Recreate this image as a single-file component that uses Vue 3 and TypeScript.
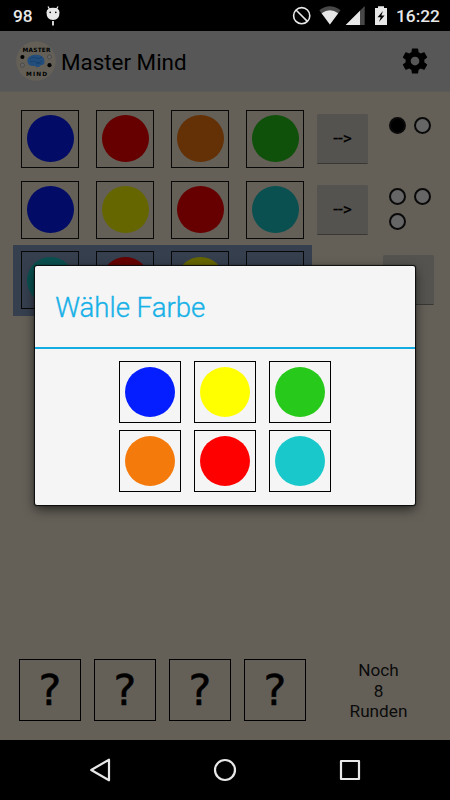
<script setup lang="ts">
type Tone = 'blue' | 'red' | 'orange' | 'green' | 'yellow' | 'teal' | 'none'
type Peg = 'black' | 'white'

interface Guess {
  colors: Tone[]
  pegs: Peg[]
}

const guesses: Guess[] = [
  { colors: ['blue', 'red', 'orange', 'green'], pegs: ['black', 'white'] },
  { colors: ['blue', 'yellow', 'red', 'teal'], pegs: ['white', 'white', 'white'] },
]
const current: Tone[] = ['teal', 'red', 'yellow', 'none']
const palette: Tone[] = ['blue', 'yellow', 'green', 'orange', 'red', 'teal']
const roundsLeft = 8
</script>

<template>
  <div class="screen">
    <header class="status">
      <span class="status-temp">98</span>
      <svg class="status-robot" width="16" height="22" viewBox="0 0 16 22">
        <path d="M3 1.5L5 5M13 1.5L11 5" stroke="#e8e8e8" stroke-width="1.3" />
        <path d="M1.500 7.500Q1.500 2.800 8 2.800T14.500 7.500Q14.500 15 8 15T1.500 7.500Z" fill="#e8e8e8" />
        <circle cx="5.200" cy="7.400" r=".8" fill="#000" />
        <circle cx="10.800" cy="7.400" r=".8" fill="#000" />
        <path d="M8 16v4.500" stroke="#e8e8e8" stroke-width="1.800" />
      </svg>
      <span class="grow"></span>
      <svg class="status-icons" width="96" height="22" viewBox="0 0 96 22">
        <g fill="none" stroke="#e8e8e8" stroke-width="1.6">
          <circle cx="9.700" cy="10.700" r="8.100" />
          <path d="M4 5L15.400 16.400" />
        </g>
        <path d="M27.300 5.200Q37.900-2.600 48.500 5.200L37.900 19.500Z" fill="#484848" />
        <path d="M29.600 8.300Q37.900 2.400 46.200 8.300L37.900 19.500Z" fill="#e8e8e8" />
        <path d="M53.700 20L72.700 1V20Z" fill="#484848" />
        <path d="M53.700 20L68 5.700V20Z" fill="#e8e8e8" />
        <path d="M83 3h3V1.200h6V3h3v17H83Z" fill="#e8e8e8" />
        <path d="M91 6L85.500 12.300H88.700L87 17L92.600 10.500H89.300L91 6Z" fill="#000" />
      </svg>
      <span class="status-clock">16:22</span>
    </header>

    <div class="appbar">
      <svg class="logo" width="40" height="40" viewBox="0 0 40 40">
        <circle cx="20" cy="20" r="19.800" fill="#646058" />
        <text class="logo-text" x="20.500" y="10.700" textLength="28">MASTER</text>
        <text class="logo-text" x="20.500" y="35.400" textLength="21">MIND</text>
        <path d="M11.500 21C10.500 16.500 15 13.500 20 13.800C25 13.500 29 16.500 28.400 20.500C29 23.500 26 24.300 24.500 24.200C24 26.500 20 27 19 24.700C15 25.500 12 24 11.500 21Z" fill="#234e7c" />
        <path d="M14 18q3-3 6-1t6-1M14 21q4-2 6 0t6-1M20 23q3-2 5 0" fill="none" stroke="#153c68" stroke-width=".8" />
        <circle cx="6.400" cy="16" r="2.100" fill="#000" />
        <circle cx="33.500" cy="24.200" r="2.100" fill="#000" />
        <circle cx="33.500" cy="16" r="2.100" fill="#646464" stroke="#444" stroke-width=".7" />
        <circle cx="6.400" cy="24.200" r="2.100" fill="#646464" stroke="#444" stroke-width=".7" />
      </svg>
      <h1 class="title">Master Mind</h1>
      <span class="grow"></span>
      <svg class="gear" width="30" height="30" viewBox="0 0 24 24">
        <path fill="#000" d="M19.430 12.980c.04-.32.07-.64.07-.98s-.03-.66-.07-.98l2.110-1.650c.19-.15.24-.42.12-.64l-2-3.460c-.12-.22-.39-.3-.61-.22l-2.490 1c-.52-.4-1.080-.73-1.690-.98l-.38-2.650C14.460 2.180 14.250 2 14 2h-4c-.25 0-.46.18-.49.42l-.38 2.650c-.61.25-1.170.59-1.690.98l-2.490-1c-.23-.09-.49 0-.61.22l-2 3.460c-.13.22-.07.49.12.64l2.110 1.650c-.04.32-.07.65-.07.98s.03.66.07.98l-2.110 1.650c-.19.15-.24.42-.12.64l2 3.460c.12.22.39.3.61.22l2.490-1c.52.4 1.080.73 1.690.98l.38 2.650c.03.24.24.42.49.42h4c.25 0 .46-.18.49-.42l.38-2.650c.61-.25 1.170-.59 1.690-.98l2.490 1c.23.09.49 0 .61-.22l2-3.460c.12-.22.07-.49-.12-.64l-2.110-1.650zM12 15.500c-1.930 0-3.500-1.570-3.500-3.500s1.570-3.500 3.500-3.500 3.500 1.570 3.500 3.500-1.570 3.500-3.500 3.500z" />
      </svg>
    </div>

    <main class="board">
      <div v-for="(guess, i) in guesses" :key="i" class="row">
        <div class="cells">
          <div v-for="(tone, j) in guess.colors" :key="j" class="slot">
            <div class="cell"><span class="dot" :class="tone"></span></div>
          </div>
        </div>
        <button class="btn">--&gt;</button>
        <div class="pegs">
          <span v-for="(peg, j) in guess.pegs" :key="j" class="peg" :class="peg"></span>
        </div>
      </div>
      <div class="row">
        <div class="cells active">
          <div v-for="(tone, j) in current" :key="j" class="slot">
            <div class="cell"><span class="dot" :class="tone"></span></div>
          </div>
        </div>
        <button class="btn last"></button>
      </div>

      <div class="secret">
        <div v-for="n in 4" :key="n" class="secret-cell">?</div>
        <p class="rounds">Noch<br />{{ roundsLeft }}<br />Runden</p>
      </div>
    </main>

    <nav class="nav">
      <svg width="30" height="30" viewBox="0 0 30 30"><path d="M6.200 15L24 4.700V25.300Z" /></svg>
      <svg width="30" height="30" viewBox="0 0 30 30"><circle cx="15" cy="15" r="10" /></svg>
      <svg width="30" height="30" viewBox="0 0 30 30"><rect x="6" y="6" width="18" height="18" /></svg>
    </nav>

    <section class="dialog">
      <h2 class="dialog-title">Wähle Farbe</h2>
      <div class="palette">
        <div v-for="tone in palette" :key="tone" class="swatch">
          <span class="dot vivid" :class="tone"></span>
        </div>
      </div>
    </section>
  </div>
</template>

<style>
body {
  margin: 0;
  background: #000;
}
</style>

<style scoped>
.screen {
  position: relative;
  display: flex;
  flex-direction: column;
  width: 450px;
  height: 800px;
  overflow: hidden;
  background: #646058;
  font-family: Roboto, "Liberation Sans", sans-serif;
  color: #000;
}
.grow {
  flex: 1;
}
.status {
  display: flex;
  align-items: center;
  flex: none;
  box-sizing: border-box;
  height: 31px;
  padding: 1px 11px 0 13px;
  background: #000;
  color: #e8e8e8;
  font-size: 17.300px;
  font-weight: 500;
}
.status-temp {
  width: 32px;
}
.status-icons {
  margin-right: 8.500px;
}
.status-clock {
  width: 43px;
  white-space: nowrap;
}
.appbar {
  display: flex;
  align-items: center;
  flex: none;
  box-sizing: border-box;
  height: 60px;
  padding: 0 20px 0 15.500px;
  background: #575757;
}
.logo-text {
  font: bold 5.800px "DejaVu Sans", sans-serif;
  text-anchor: middle;
}
.title {
  margin: 2px 0 0 5.500px;
  font-size: 22.400px;
  font-weight: 400;
}
.board {
  display: flex;
  flex-direction: column;
  flex: 1;
  box-sizing: border-box;
  padding: 11.400px 0 19px 12.700px;
  border-top: 1px solid #5d5b56;
}
.row {
  display: flex;
  height: 70.800px;
}
.cells {
  display: flex;
  align-items: center;
  width: 299.700px;
}
.active {
  background: #363f4e;
}
.slot {
  display: flex;
  flex: none;
  justify-content: center;
  width: 75px;
}
.cell {
  display: flex;
  align-items: center;
  justify-content: center;
  box-sizing: border-box;
  width: 58px;
  height: 58px;
  border: 1px solid #080808;
}
.dot {
  width: 46.700px;
  height: 46.700px;
  border-radius: 50%;
}
.blue { background: #020c66; }
.red { background: #660000; }
.orange { background: #643005; }
.green { background: #0f500a; }
.yellow { background: #666600; }
.teal { background: #0a5050; }
.vivid {
  width: 50px;
  height: 50px;
}
.vivid.blue { background: #051eff; }
.vivid.red { background: #ff0000; }
.vivid.orange { background: #f57a0c; }
.vivid.green { background: #27c91a; }
.vivid.yellow { background: #ffff00; }
.vivid.teal { background: #19c8cb; }
.btn {
  box-sizing: border-box;
  width: 50.300px;
  height: 50px;
  margin: 10.500px 0 0 5px;
  padding: 0;
  border: 0;
  border-bottom: 1px solid #383734;
  border-radius: 1.500px;
  background: #54534f;
  font: 400 17.300px Roboto, "Liberation Sans", sans-serif;
  color: #000;
  -webkit-text-stroke: 0.2px #000;
}
.btn.last {
  margin-left: 71px;
}
.pegs {
  display: flex;
  flex-wrap: wrap;
  align-content: flex-start;
  gap: 8px;
  width: 42px;
  margin: 14px 0 0 21.300px;
}
.peg {
  box-sizing: border-box;
  width: 17px;
  height: 17px;
  border: 2px solid #0a0a0a;
  border-radius: 50%;
}
.peg.black { background: #000; }
.peg.white { background: #666; }
.secret {
  display: flex;
  gap: 13px;
  height: 62px;
  margin: auto 0 0 6.300px;
}
.secret-cell {
  display: flex;
  align-items: center;
  justify-content: center;
  box-sizing: border-box;
  width: 62px;
  height: 62px;
  border: 1px solid #000;
  font: 43px/1 "DejaVu Sans", sans-serif;
  -webkit-text-stroke: 0.5px #000;
}
.rounds {
  width: 100px;
  margin: 1px 0 0 9.500px;
  text-align: center;
  color: #0b0b0b;
  font-size: 17.200px;
  line-height: 20.700px;
}
.nav {
  display: flex;
  flex: none;
  align-items: center;
  justify-content: center;
  gap: 95px;
  height: 60px;
  background: #000;
}
.nav svg {
  fill: none;
  stroke: #e8e8e8;
  stroke-width: 2.200;
  stroke-linejoin: round;
}
.dialog {
  position: absolute;
  top: 266px;
  left: 35px;
  box-sizing: border-box;
  width: 380px;
  height: 239px;
  border-radius: 2px;
  background: #f5f5f5;
  box-shadow: 0 0 1px 1px #0a0a0a, 0 4px 12px rgba(0, 0, 0, 0.65);
}
.dialog-title {
  box-sizing: border-box;
  height: 83px;
  margin: 0;
  padding-left: 20.200px;
  border-bottom: 2px solid #12abe2;
  color: #17b1e7;
  font-size: 27.600px;
  font-weight: 300;
  line-height: 83px;
  -webkit-text-stroke: 0.350px #17b1e7;
}
.palette {
  display: grid;
  grid-template-columns: repeat(3, 62px);
  gap: 7px 13px;
  justify-content: center;
  padding-top: 12.400px;
}
.swatch {
  display: flex;
  align-items: center;
  justify-content: center;
  box-sizing: border-box;
  width: 62px;
  height: 62px;
  border: 1px solid #000;
}
</style>
